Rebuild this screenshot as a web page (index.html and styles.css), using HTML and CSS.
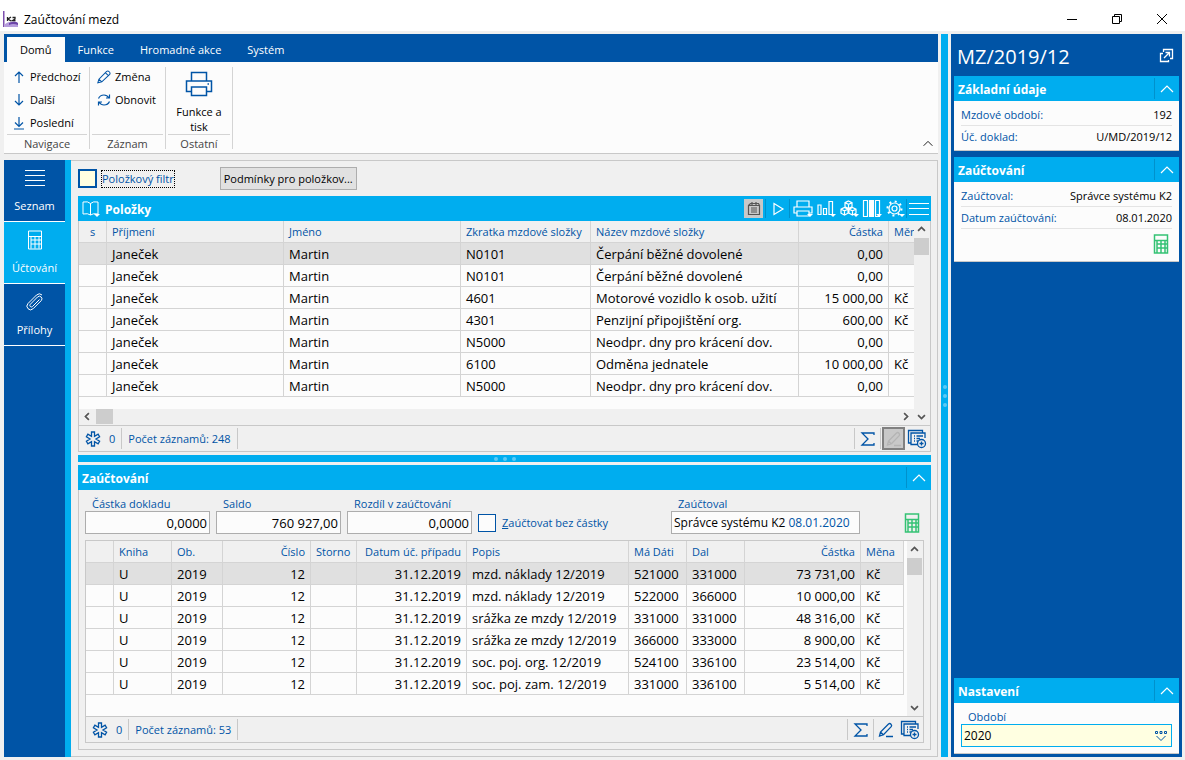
FILE: index.html
```html
<!DOCTYPE html>
<html lang="cs">
<head>
<meta charset="utf-8">
<title>Zaúčtování mezd</title>
<link rel="stylesheet" href="styles.css">
</head>
<body>
<svg class="sprite" aria-hidden="true">
  <symbol id="i-chevron-up" viewBox="0 0 16 16"><path d="M2 11l6-6 6 6"/></symbol>
  <symbol id="i-star" viewBox="0 0 16 16"><path d="M6.500 1h3v4.300l3.600-2.100 1.500 2.600L11 8l3.600 2.200-1.500 2.600-3.600-2.100V15h-3v-4.300l-3.600 2.100-1.500-2.600L5 8 1.400 5.800l1.500-2.600 3.600 2.100z"/></symbol>
  <symbol id="i-sigma" viewBox="0 0 16 16"><path d="M14 4V2H2l6 6-6 6h12v-2"/></symbol>
  <symbol id="i-pencil" viewBox="0 0 16 16"><path d="M1 14.500l1.200-4L11 1.500q1.500-1 3 .5t.5 3L5.500 13.500zM2 10.500l3.500 3M9.500 3l3.500 3.500"/></symbol>
  <symbol id="i-edit" viewBox="0 0 16 16"><path d="M1.500 14l1-4L10.500 2q1.300-1 2.500.2t.2 2.500L5.500 12.800zM2.500 10l3 3M8 14.500h7"/></symbol>
  <symbol id="i-records" viewBox="0 0 20 20"><path d="M4 14H1.500V1.500h14V4M10.500 15.500H4V4h14v5M7 7h1M7 9.500h1M7 12h1M9.500 7H16M9.500 9.500H13M9.500 12H11"/><circle cx="14.500" cy="14.500" r="4"/><path d="M12.500 14.500h4M14.500 12.500v4"/></symbol>
  <symbol id="i-calc" viewBox="0 0 16 20"><path d="M1.500 1h13v18h-13zM1.500 6.500h13M4 10h10M4 14h10M4 6.500v12M8 6.500v12M12 6.500v12"/></symbol>
  <symbol id="i-printer" viewBox="0 0 28 26"><path d="M6.500 10V1.500h15V10M6.500 20.500h-5V10h25v10.500h-5M6.500 16h15v8.500h-15zM22.500 13h1.500"/></symbol>
  <symbol id="i-asc" viewBox="0 0 16 16"><path d="M3 10l5-5 5 5"/></symbol>
</svg>

<header class="titlebar">
  <svg class="logo" viewBox="0 0 16 16" aria-hidden="true"><path fill="#7d4fae" d="M0 0h1.500v16H0z"/><path fill="#b59cdc" d="M2 13q5-4 13-1v4H2z"/><path fill="#6c46a8" d="M6 12q6-3 9 0v2q-5-2-9 0z"/><path stroke="#222" stroke-width="1.300" fill="none" d="M4.500 6v4M8 6L5 8l3 2M9.500 6.500h2.500V8l-2.500 1.500h3"/></svg>
  <h1 class="titlebar-text">Zaúčtování mezd</h1>
  <div class="window-buttons">
    <button aria-label="Minimalizovat"><svg viewBox="0 0 12 12"><path d="M1 6.500h10"/></svg></button>
    <button aria-label="Obnovit okno"><svg viewBox="0 0 12 12"><path d="M1.500 3.500h7v7h-7zM3.500 3.500v-2h7v7h-2"/></svg></button>
    <button aria-label="Zavřít"><svg viewBox="0 0 12 12"><path d="M1 1l10 10M11 1L1 11"/></svg></button>
  </div>
</header>

<div class="frame">
  <div class="workspace">
    <nav class="tabs">
      <button class="tab tab-active">Domů</button>
      <button class="tab">Funkce</button>
      <button class="tab">Hromadné akce</button>
      <button class="tab">Systém</button>
    </nav>

    <div class="ribbon">
      <section class="ribbon-group group-nav">
        <div class="ribbon-items">
          <button class="ribbon-button"><svg class="icon" viewBox="0 0 14 14"><path d="M7 13V2M3 6l4-4 4 4"/></svg>Předchozí</button>
          <button class="ribbon-button"><svg class="icon" viewBox="0 0 14 14"><path d="M7 1v11M3 8l4 4 4-4"/></svg>Další</button>
          <button class="ribbon-button"><svg class="icon" viewBox="0 0 14 14"><path d="M7 1v9M3 6.500l4 4 4-4M2 13h10"/></svg>Poslední</button>
        </div>
        <h2 class="ribbon-title">Navigace</h2>
      </section>
      <section class="ribbon-group group-record">
        <div class="ribbon-items">
          <button class="ribbon-button"><svg class="icon"><use href="#i-pencil"/></svg>Změna</button>
          <button class="ribbon-button"><svg class="icon" viewBox="0 0 14 14"><path d="M1.500 5.500Q3 2 7 2q3 0 5 3M12.500 1.500V5H9M12.500 8.500Q11 12 7 12q-3 0-5-3M1.500 12.500V9H5"/></svg>Obnovit</button>
        </div>
        <h2 class="ribbon-title">Záznam</h2>
      </section>
      <section class="ribbon-group group-other">
        <div class="ribbon-items">
          <button class="ribbon-large"><svg class="icon-large"><use href="#i-printer"/></svg>Funkce a<br>tisk</button>
        </div>
        <h2 class="ribbon-title">Ostatní</h2>
      </section>
      <button class="ribbon-collapse" aria-label="Sbalit pás"><svg class="icon-small"><use href="#i-asc"/></svg></button>
    </div>

    <div class="main">
      <nav class="side-nav">
        <button class="side-item"><svg class="side-icon" viewBox="0 0 20 20"><path d="M0 2.500h20M0 7.500h20M0 12.500h20M0 17.500h20"/></svg>Seznam</button>
        <button class="side-item side-active"><svg class="side-icon"><use href="#i-calc"/></svg>Účtování</button>
        <button class="side-item"><svg class="side-icon" viewBox="0 0 20 20"><path d="M14.500 7.500l-7 7q-1.200 1-2.200 0t0-2.200L12.500 5q2-1.800 3.700 0t0 3.700l-8 8q-2.700 2.500-5.200 0t0-5.200l8.500-8.500Q14.500.5 17 3"/></svg>Přílohy</button>
      </nav>

      <main class="content">
        <div class="filter-row">
          <label class="check check-focus"><input type="checkbox"><span>Položkový filtr</span></label>
          <button class="condition-button">Podmínky pro položkov...</button>
        </div>

        <section class="items">
          <header class="panel-head">
            <svg class="book" viewBox="0 0 18 18"><path d="M8.500 3.500Q6 1 1 2v12q5-1 7.500 1 2.500-2 7.500-1V2q-5-1-7.500 1.500zM8.500 3.500V15"/><path class="solid" d="M12 14h6l-3 3z"/></svg>
            <h2>Položky</h2>
            <div class="tools">
              <button class="tool tool-pressed" aria-label="Archiv"><svg viewBox="0 0 20 20"><path d="M4.500 6.500h11v9h-11zM4.500 6.500l2-2h8l1 2M8 3v3M12 3v3M7 9h6M7 11h6M7 13h6"/></svg></button>
              <button class="tool tool-play" aria-label="Spustit"><svg viewBox="0 0 20 20"><path d="M6 4.500l9 5.500-9 5.500z"/></svg></button>
              <button class="tool" aria-label="Tisk"><svg viewBox="0 0 20 20"><path d="M4 8V2h12v6M4 14H1V8h18v6h-3M4 12h12v5H4z"/><path class="solid" d="M14 15h6l-3 3z"/></svg></button>
              <button class="tool" aria-label="Grafy"><svg viewBox="0 0 20 20"><path d="M2 6h3v9.500H2zM7.500 9.500h3v6h-3zM13 2.500h3.500v13H13z"/><path class="solid" d="M14 15h6l-3 3z"/></svg></button>
              <button class="tool" aria-label="Kostky"><svg viewBox="0 0 20 20"><path d="M9.500 2l3.500 1.700v4L9.500 9.500 6 7.700v-4zM6 3.700l3.500 1.600L13 3.700M9.500 5.300v4M5.500 8.500L9 10.200v4l-3.500 1.800L2 14.200v-4zM2 10.200l3.500 1.600L9 10.200M5.500 11.800V16M13.500 8.500l3.500 1.700v4L13.500 16 10 14.200v-4zM10 10.200l3.500 1.600 3.500-1.600M13.500 11.800V16"/><path class="solid" d="M14 15h6l-3 3z"/></svg></button>
              <button class="tool" aria-label="Sloupce"><svg viewBox="0 0 20 20"><path d="M1.500 1.500h4v16h-4zM13.500 1.500h4v16h-4z"/><path class="solid" d="M7 1h5v17H7zM14 15h6l-3 3z"/></svg></button>
              <button class="tool" aria-label="Nastavení"><svg viewBox="0 0 20 20"><circle cx="9.500" cy="9.500" r="5.500"/><circle cx="9.500" cy="9.500" r="2.500"/><circle class="teeth" cx="9.500" cy="9.500" r="7"/><path class="solid" d="M14 15h6l-3 3z"/></svg></button>
              <button class="tool tool-menu" aria-label="Nabídka"><svg viewBox="0 0 20 20"><path d="M0 4.500h20M0 9.500h20M0 15.500h20"/></svg></button>
            </div>
          </header>

          <div class="grid-box items-grid">
            <div class="table-area">
              <table class="grid">
                <colgroup><col class="w28"><col class="w177"><col class="w177"><col class="w130"><col><col class="w90"><col class="w25"></colgroup>
                <thead><tr><th class="mid">s</th><th>Příjmení</th><th>Jméno</th><th>Zkratka mzdové složky</th><th>Název mzdové složky</th><th class="num">Částka</th><th class="cut">Měna</th></tr></thead>
                <tbody>
                  <tr class="selected"><td></td><td>Janeček</td><td>Martin</td><td>N0101</td><td>Čerpání běžné dovolené</td><td class="num">0,00</td><td class="cut"></td></tr>
                  <tr><td></td><td>Janeček</td><td>Martin</td><td>N0101</td><td>Čerpání běžné dovolené</td><td class="num">0,00</td><td class="cut"></td></tr>
                  <tr><td></td><td>Janeček</td><td>Martin</td><td>4601</td><td>Motorové vozidlo k osob. užití</td><td class="num">15 000,00</td><td class="cut">Kč</td></tr>
                  <tr><td></td><td>Janeček</td><td>Martin</td><td>4301</td><td>Penzijní připojištění org.</td><td class="num">600,00</td><td class="cut">Kč</td></tr>
                  <tr><td></td><td>Janeček</td><td>Martin</td><td>N5000</td><td>Neodpr. dny pro krácení dov.</td><td class="num">0,00</td><td class="cut"></td></tr>
                  <tr><td></td><td>Janeček</td><td>Martin</td><td>6100</td><td>Odměna jednatele</td><td class="num">10 000,00</td><td class="cut">Kč</td></tr>
                  <tr><td></td><td>Janeček</td><td>Martin</td><td>N5000</td><td>Neodpr. dny pro krácení dov.</td><td class="num">0,00</td><td class="cut"></td></tr>
                </tbody>
              </table>
            </div>
            <div class="scroll-v">
              <svg class="arrow"><use href="#i-asc"/></svg><div class="thumb"></div><svg class="arrow arrow-down"><use href="#i-asc"/></svg>
            </div>
            <div class="scroll-h">
              <svg class="arrow arrow-left"><use href="#i-asc"/></svg><div class="thumb"></div><svg class="arrow arrow-right"><use href="#i-asc"/></svg>
            </div>
          </div>
          <footer class="status">
            <span class="status-cell status-star"><svg class="status-icon"><use href="#i-star"/></svg>0</span>
            <span class="status-cell">Počet záznamů: 248</span>
            <div class="status-tools">
              <button class="status-button status-sum" aria-label="Součet"><svg class="status-icon"><use href="#i-sigma"/></svg></button>
              <button class="status-button status-disabled" aria-label="Upravit" disabled><svg class="status-icon"><use href="#i-edit"/></svg></button>
              <button class="status-button" aria-label="Přidat"><svg class="records"><use href="#i-records"/></svg></button>
            </div>
          </footer>
        </section>

        <div class="split split-h"><i></i><i></i><i></i></div>

        <section class="posting">
          <header class="panel-head">
            <h2>Zaúčtování</h2>
            <button class="collapse" aria-label="Sbalit"><svg><use href="#i-chevron-up"/></svg></button>
          </header>
          <div class="posting-body">
            <div class="fields">
              <label class="field"><span>Částka dokladu</span><input type="text" value="0,0000"></label>
              <label class="field"><span>Saldo</span><input type="text" value="760 927,00"></label>
              <label class="field"><span>Rozdíl v zaúčtování</span><input type="text" value="0,0000"></label>
              <label class="check check-plain"><input type="checkbox"><span><u>Z</u>aúčtovat bez částky</span></label>
              <div class="field field-wide"><span>Zaúčtoval</span><output>Správce systému K2 <b>08.01.2020</b></output></div>
              <svg class="calc"><use href="#i-calc"/></svg>
            </div>

            <div class="grid-frame">
              <div class="grid-box posting-grid">
                <div class="table-area">
                  <table class="grid">
                    <colgroup><col class="w28"><col class="w58"><col class="w51"><col class="w88"><col class="w46"><col class="w110"><col><col class="w58"><col class="w58"><col class="w116"><col class="w43"></colgroup>
                    <thead><tr><th></th><th>Kniha</th><th>Ob.</th><th class="num">Číslo</th><th>Storno</th><th class="num">Datum úč. případu</th><th>Popis</th><th>Má Dáti</th><th>Dal</th><th class="num">Částka</th><th>Měna</th></tr></thead>
                    <tbody>
                      <tr class="selected"><td></td><td>U</td><td>2019</td><td class="num">12</td><td></td><td class="num">31.12.2019</td><td>mzd. náklady 12/2019</td><td>521000</td><td>331000</td><td class="num">73 731,00</td><td>Kč</td></tr>
                      <tr><td></td><td>U</td><td>2019</td><td class="num">12</td><td></td><td class="num">31.12.2019</td><td>mzd. náklady 12/2019</td><td>522000</td><td>366000</td><td class="num">10 000,00</td><td>Kč</td></tr>
                      <tr><td></td><td>U</td><td>2019</td><td class="num">12</td><td></td><td class="num">31.12.2019</td><td>srážka ze mzdy 12/2019</td><td>331000</td><td>331000</td><td class="num">48 316,00</td><td>Kč</td></tr>
                      <tr><td></td><td>U</td><td>2019</td><td class="num">12</td><td></td><td class="num">31.12.2019</td><td>srážka ze mzdy 12/2019</td><td>366000</td><td>333000</td><td class="num">8 900,00</td><td>Kč</td></tr>
                      <tr><td></td><td>U</td><td>2019</td><td class="num">12</td><td></td><td class="num">31.12.2019</td><td>soc. poj. org. 12/2019</td><td>524100</td><td>336100</td><td class="num">23 514,00</td><td>Kč</td></tr>
                      <tr><td></td><td>U</td><td>2019</td><td class="num">12</td><td></td><td class="num">31.12.2019</td><td>soc. poj. zam. 12/2019</td><td>331000</td><td>336100</td><td class="num">5 514,00</td><td>Kč</td></tr>
                    </tbody>
                  </table>
                </div>
                <div class="scroll-v">
                  <svg class="arrow"><use href="#i-asc"/></svg><div class="thumb"></div><svg class="arrow arrow-down"><use href="#i-asc"/></svg>
                </div>
              </div>
              <footer class="status">
                <span class="status-cell status-star"><svg class="status-icon"><use href="#i-star"/></svg>0</span>
                <span class="status-cell">Počet záznamů: 53</span>
                <div class="status-tools">
                  <button class="status-button status-sum" aria-label="Součet"><svg class="status-icon"><use href="#i-sigma"/></svg></button>
                  <button class="status-button" aria-label="Upravit"><svg class="status-icon"><use href="#i-edit"/></svg></button>
                  <button class="status-button" aria-label="Přidat"><svg class="records"><use href="#i-records"/></svg></button>
                </div>
              </footer>
            </div>
          </div>
        </section>
      </main>
    </div>
  </div>

  <div class="split split-v"><i></i><i></i><i></i></div>

  <aside class="preview">
    <header class="preview-head">
      <h2>MZ/2019/12</h2>
      <button aria-label="Otevřít v okně"><svg viewBox="0 0 16 16"><path d="M5 5.500H2.500v8h8V12M5.500 4V1.500h9v9H12M6 10l5-5M7.500 4.500h4v4"/></svg></button>
    </header>
    <section class="card">
      <header class="panel-head"><h2>Základní údaje</h2><button class="collapse" aria-label="Sbalit"><svg><use href="#i-chevron-up"/></svg></button></header>
      <dl class="facts">
        <div><dt>Mzdové období:</dt><dd>192</dd></div>
        <div class="fact-plain"><dt>Úč. doklad:</dt><dd>U/MD/2019/12</dd></div>
      </dl>
    </section>
    <section class="card">
      <header class="panel-head"><h2>Zaúčtování</h2><button class="collapse" aria-label="Sbalit"><svg><use href="#i-chevron-up"/></svg></button></header>
      <dl class="facts">
        <div><dt>Zaúčtoval:</dt><dd>Správce systému K2</dd></div>
        <div><dt>Datum zaúčtování:</dt><dd>08.01.2020</dd></div>
      </dl>
      <div class="card-icon"><svg class="calc"><use href="#i-calc"/></svg></div>
    </section>
    <section class="card card-last">
      <header class="panel-head"><h2>Nastavení</h2><button class="collapse" aria-label="Sbalit"><svg><use href="#i-chevron-up"/></svg></button></header>
      <div class="settings">
        <label for="period">Období</label>
        <div class="select">
          <select id="period"><option>2020</option></select>
          <svg viewBox="0 0 14 14"><path d="M1.500 2.500h2v2h-2zM6 2.500h2v2H6zM10.500 2.500h2v2h-2zM2.500 7L7 11.500 11.500 7"/></svg>
        </div>
      </div>
    </section>
  </aside>
</div>
</body>
</html>
```

FILE: styles.css
```css
:root {
  --blue: #0054a6;
  --cyan: #00adef;
  --face: #f0f0f0;
  --paper: #fcfcfc;
  --line: #c8c8c8;
  --green: #34c274;
}

* { box-sizing: border-box; }

body {
  margin: 0;
  min-height: 100vh;
  display: flex;
  flex-direction: column;
  background: var(--face);
  font: 11px/16px "Open Sans", "Noto Sans", sans-serif;
  color: #000;
}

h1, h2, dl, dd { margin: 0; font-size: inherit; font-weight: normal; }

button {
  border: 0;
  padding: 0;
  background: none;
  color: inherit;
  font: inherit;
}

input, select, output { font: inherit; color: inherit; }

svg { display: block; fill: none; stroke: currentColor; }

.sprite { display: none; }
.solid { fill: currentColor; stroke: none; }
.teeth { stroke-width: 2; stroke-dasharray: 2 3.500; }

/* Window title */
.titlebar {
  display: flex;
  align-items: center;
  height: 31px;
  padding: 6px 0 0 3px;
  background: #fff;
}
.logo { width: 16px; height: 16px; stroke: none; }
.titlebar-text { flex: 1; padding: 2px 0 0 5px; font-size: 12px; }
.window-buttons { display: flex; }
.window-buttons button { display: grid; place-items: center; width: 45px; height: 24px; }
.window-buttons button:last-child { width: 46px; }
.window-buttons svg { width: 12px; height: 12px; }

.frame {
  flex: 1;
  display: flex;
  gap: 3px;
  padding: 3px 3px 3px 4px;
}
.workspace { flex: 1; min-width: 0; display: flex; flex-direction: column; }

/* Menu tabs and ribbon */
.tabs { display: flex; height: 28px; padding: 3px 3px 0; background: var(--blue); color: #fff; }
.tab { padding: 0 13px; }
.tab-active { background: var(--paper); color: #000; }

.ribbon {
  display: flex;
  height: 92px;
  padding: 5px 3px 2px;
  background: var(--paper);
  border-bottom: 1px solid var(--line);
}
.ribbon-group { display: flex; flex-direction: column; border-right: 1px solid #d4d4d4; margin: 0 2px 2px 0; padding-right: 2px; }
.group-nav { width: 83px; }
.group-record { width: 74px; }
.group-other { width: 65px; }
.ribbon-items { flex: 1 1 0; min-height: 0; }
.ribbon-title { border-top: 1px solid #d4d4d4; padding-top: 1px; height: 15px; text-align: center; color: #444; }
.ribbon-button { display: flex; align-items: center; gap: 4px; height: 23px; padding: 0 0 4px 5px; white-space: nowrap; }
.icon { width: 14px; height: 14px; flex: none; color: var(--blue); stroke-width: 1.200; }
.ribbon-large { width: 100%; padding: 4px 0 0; line-height: 15px; }
.icon-large { width: 28px; height: 26px; margin: 0 auto 7px; color: var(--blue); stroke-width: 1.500; }
.ribbon-collapse { margin-left: auto; align-self: flex-end; }
.icon-small { width: 14px; height: 14px; }

/* Side navigation */
.main { flex: 1; display: flex; padding-top: 6px; }
.side-nav { width: 67px; background: var(--blue); border-right: 6px solid var(--cyan); color: #fff; }
.side-item {
  display: flex;
  flex-direction: column;
  align-items: center;
  gap: 10px;
  width: 100%;
  height: 62px;
  padding-top: 8px;
  border-bottom: 1px solid #fff;
}
.side-icon { width: 20px; height: 20px; }
.side-active { background: var(--cyan); }

.content {
  flex: 1;
  min-width: 0;
  display: flex;
  flex-direction: column;
  padding: 0 6px 6px 7px;
  border: solid var(--line);
  border-width: 1px 1px 1px 0;
}

.filter-row { display: flex; align-items: center; gap: 46px; height: 35px; }
.check { display: flex; align-items: center; gap: 5px; color: var(--blue); white-space: nowrap; }
.check input { appearance: none; margin: 0; width: 19px; height: 19px; border: 2px solid var(--blue); background: #ffffe1; }
.check-focus span { outline: 1px dotted #000; }
.condition-button { width: 137px; height: 23px; border: 1px solid #adadad; background: #e1e1e1; white-space: nowrap; }

/* Panels */
.panel-head { display: flex; align-items: center; height: 25px; padding-left: 4px; background: var(--cyan); color: #fff; }
.panel-head h2 { flex: 1; padding-top: 2px; font-size: 12px; font-weight: bold; }
.book { width: 18px; height: 18px; margin-right: 5px; }
.tools { display: flex; align-items: center; padding-right: 2px; }
.tool { display: grid; place-items: center; width: 23px; height: 19px; }
.tool svg { width: 20px; height: 20px; stroke-width: 1.200; }
.tool-pressed { width: 19px; background: var(--line); color: #555; }
.tool-play { width: 25px; margin: 0 1px 0 2px; border: solid #0091cc; border-width: 0 1px; }
.tool-menu { justify-content: end; border-left: 1px solid #0091cc; }
.collapse { display: grid; place-items: center; width: 25px; height: 21px; border-left: 1px solid #0091cc; }
.collapse svg { width: 16px; height: 16px; stroke-width: 1.200; }

.grid-box { display: grid; grid-template-columns: minmax(0, 1fr) 16px; background: var(--paper); }
.items-grid { grid-template-rows: 188px 16px; border: solid var(--line); border-width: 0 1px; }
.table-area { overflow: hidden; }
.grid { width: 100%; table-layout: fixed; border-collapse: separate; border-spacing: 0; }
.grid th, .grid td {
  height: 22px;
  padding: 0 5px;
  border: solid #d4d4d4;
  border-width: 0 1px 1px 0;
  white-space: nowrap;
  overflow: hidden;
  text-align: left;
}
.grid th { background: var(--face); color: var(--blue); font-weight: normal; }
.grid td { font-size: 13px; }
.grid .num { text-align: right; }
.grid .mid { text-align: center; }
.grid .cut { padding-right: 0; border-right: 0; }
.grid .selected td { background: #e0e0e0; }
.w25 { width: 25px; }
.w28 { width: 28px; }
.w43 { width: 43px; }
.w46 { width: 46px; }
.w51 { width: 51px; }
.w58 { width: 58px; }
.w88 { width: 88px; }
.w90 { width: 90px; }
.w110 { width: 110px; }
.w116 { width: 116px; }
.w130 { width: 130px; }
.w177 { width: 177px; }

.scroll-v { grid-row: 1 / -1; grid-column: 2; display: flex; flex-direction: column; background: var(--face); }
.scroll-h { display: flex; background: var(--face); }
.thumb { width: 17px; height: 17px; background: #cdcdcd; }
.scroll-v .thumb { width: 15px; }
.scroll-h .thumb { height: 15px; }
.arrow { width: 15px; height: 17px; padding: 2px; color: #555; stroke-width: 2.500; }
.scroll-h .arrow { width: 17px; height: 15px; }
.arrow-down { margin-top: auto; transform: rotate(180deg); }
.arrow-left { transform: rotate(-90deg); }
.arrow-right { margin-left: auto; transform: rotate(90deg); }

.status { display: flex; align-items: center; height: 27px; border: 1px solid var(--line); color: var(--blue); }
.status-cell { display: flex; align-items: center; height: 21px; padding: 0 6px; border-right: 1px solid var(--line); }
.status-star { gap: 8px; }
.status-icon { width: 16px; height: 16px; stroke-width: 1.300; }
.status-tools { display: flex; align-items: center; margin-left: auto; padding-right: 1px; }
.status-button { display: grid; place-items: center; width: 24px; height: 21px; }
.status-sum { width: 27px; border: solid var(--line); border-width: 0 1px; }
.status-disabled { width: 23px; height: 23px; margin-left: 1px; border: 2px solid #808080; background: var(--line); color: #b4b4b4; }
.records { width: 20px; height: 20px; stroke-width: 1.300; }

.split { display: flex; align-items: center; justify-content: center; gap: 5px; background: var(--cyan); }
.split i { width: 4px; height: 4px; border-radius: 50%; background: #5cc9f5; }
.split-h { height: 7px; margin: 3px 0; }
.split-v { flex-direction: column; width: 7px; }

.posting { flex: 1; display: flex; flex-direction: column; }
.posting-body { flex: 1; display: flex; flex-direction: column; padding: 5px 6px 6px; border: 1px solid var(--line); border-top: 0; }
.fields { display: flex; align-items: flex-end; gap: 6px; margin-bottom: 6px; }
.field { display: flex; flex-direction: column; width: 125px; color: var(--blue); }
.field span { padding: 2px 0 0 7px; line-height: 14px; white-space: nowrap; }
.field input, .field output {
  width: 100%;
  height: 23px;
  padding: 0 2px;
  border: 1px solid #adadad;
  background: var(--paper);
  color: #000;
  line-height: 21px;
  white-space: nowrap;
}
.field input { font-size: 13px; text-align: right; }
.field output { font-size: 12px; }
.field b { font-weight: normal; color: var(--blue); }
.field-wide { width: 189px; margin-left: auto; }
.check-plain input { width: 18px; height: 18px; border-width: 1px; background: var(--paper); }
.check-plain { gap: 6px; height: 23px; }
.calc { width: 16px; height: 20px; color: var(--green); stroke-width: 1.500; }
.fields .calc { margin: 0 4px 1px 38px; }

.grid-frame { flex: 1; display: flex; flex-direction: column; }
.posting-grid { flex: 1; border: solid var(--line); border-width: 1px 1px 0; }
.posting-grid .table-area { padding-right: 3px; }

/* Preview */
.preview { display: flex; flex-direction: column; gap: 6px; width: 231px; padding: 0 3px 3px; background: var(--blue); }
.preview-head { display: flex; align-items: center; justify-content: space-between; height: 36px; padding: 8px 5px 0 3px; color: #fff; }
.preview-head h2 { padding-top: 2px; font-size: 20px; line-height: 24px; }
.preview-head svg { width: 16px; height: 16px; stroke-width: 1.300; }
.card { background: var(--paper); border-bottom: 1px solid var(--line); }
.card-last { margin-top: auto; }
.facts { padding: 3px 7px 2px; }
.facts div { display: flex; align-items: center; justify-content: space-between; height: 22px; border-bottom: 1px solid #e4e4e4; }
.facts .fact-plain { border-bottom-color: transparent; }
.facts dt { color: var(--blue); }
.card-icon { display: flex; justify-content: flex-end; padding: 3px 10px 7px; }
.settings { padding: 5px 7px 6px; }
.settings label { display: block; padding: 2px 0 0 7px; line-height: 14px; color: var(--blue); }
.select { display: grid; align-items: center; }
.select select, .select svg { grid-area: 1 / 1; }
.select select { appearance: none; width: 100%; height: 23px; padding: 0 2px; border: 1px solid var(--cyan); border-radius: 0; background: #ffffe1; font-size: 12px; }
.select svg { justify-self: end; width: 14px; height: 14px; margin-right: 4px; color: var(--blue); pointer-events: none; }
```
